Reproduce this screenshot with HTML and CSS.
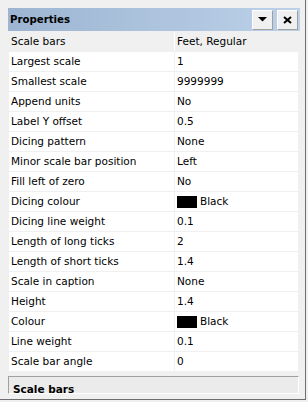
FILE: index.html
```
<!DOCTYPE html>
<html>
<head>
<meta charset="utf-8">
<link rel="stylesheet" href="styles.css">
</head>
<body>
<div class="window">
  <div class="titlebar">
    <span class="title">Properties</span>
    <div class="buttons">
      <div class="btn"><svg width="9" height="5" viewBox="0 0 9 5"><path d="M0 0H9L4.5 4.5Z" fill="#000"/></svg></div>
      <div class="btn"><svg width="9" height="8" viewBox="0 0 9 8"><path d="M1 1L8 7M8 1L1 7" stroke="#000" stroke-width="2"/></svg></div>
    </div>
  </div>
  <div class="grid">
    <div class="row head"><div class="name">Scale bars</div><div class="val">Feet, Regular</div></div>
    <div class="row"><div class="name">Largest scale</div><div class="val">1</div></div>
    <div class="row"><div class="name">Smallest scale</div><div class="val">9999999</div></div>
    <div class="row"><div class="name">Append units</div><div class="val">No</div></div>
    <div class="row"><div class="name">Label Y offset</div><div class="val">0.5</div></div>
    <div class="row"><div class="name">Dicing pattern</div><div class="val">None</div></div>
    <div class="row"><div class="name">Minor scale bar position</div><div class="val">Left</div></div>
    <div class="row"><div class="name">Fill left of zero</div><div class="val">No</div></div>
    <div class="row"><div class="name">Dicing colour</div><div class="val"><span class="swatch"></span>Black</div></div>
    <div class="row"><div class="name">Dicing line weight</div><div class="val">0.1</div></div>
    <div class="row"><div class="name">Length of long ticks</div><div class="val">2</div></div>
    <div class="row"><div class="name">Length of short ticks</div><div class="val">1.4</div></div>
    <div class="row"><div class="name">Scale in caption</div><div class="val">None</div></div>
    <div class="row"><div class="name">Height</div><div class="val">1.4</div></div>
    <div class="row"><div class="name">Colour</div><div class="val"><span class="swatch"></span>Black</div></div>
    <div class="row"><div class="name">Line weight</div><div class="val">0.1</div></div>
    <div class="row"><div class="name">Scale bar angle</div><div class="val">0</div></div>
  </div>
  <div class="desc"><span class="desc-title">Scale bars</span></div>
</div>
</body>
</html>
```
FILE: styles.css
```
html, body {
  margin: 0;
  padding: 0;
  background: #f0f0f0;
}
.window {
  box-sizing: border-box;
  width: 306px;
  height: 400px;
  background: #f0f0f0;
  border-right: 1px solid #6e6e6e;
  border-bottom: 1px solid #6e6e6e;
  padding: 8px 5px 0 8px;
  display: flex;
  flex-direction: column;
  overflow: hidden;
  font-family: "DejaVu Sans", Verdana, sans-serif;
  font-size: 10.5px;
  color: #000;
}
.titlebar {
  height: 23px;
  flex: none;
  display: flex;
  align-items: center;
  justify-content: space-between;
  background: linear-gradient(to right, #9db5d2, #bcd1e9);
  padding-left: 2px;
}
.title {
  font-weight: bold;
  font-size: 10.2px;
}
.buttons {
  display: flex;
  gap: 4px;
  padding-right: 2px;
}
.btn {
  box-sizing: border-box;
  width: 21px;
  height: 20px;
  background: #f0f0f0;
  border-top: 1px solid #ffffff;
  border-left: 1px solid #ffffff;
  border-right: 1px solid #a0a0a0;
  border-bottom: 1px solid #a0a0a0;
  display: flex;
  align-items: center;
  justify-content: center;
}
.grid {
  margin-top: 1px;
  flex: none;
  display: flex;
  flex-direction: column;
  padding: 0 2px 0 1px;
  background: #f0f0f0;
}
.row {
  display: flex;
  height: 19px;
  line-height: 19px;
  border-bottom: 1px solid #f0f0f0;
  background: #fff;
}
.row.head {
  background: #f0f0f0;
  margin: 0 -2px 0 -1px;
  padding: 0 2px 0 1px;
}
.name {
  box-sizing: border-box;
  width: 166px;
  padding-left: 2px;
  border-right: 1px solid #f0f0f0;
  white-space: nowrap;
}
.head .name {
  border-right-color: #fff;
}
.val {
  padding-left: 2px;
  display: flex;
  align-items: center;
  white-space: nowrap;
}
.swatch {
  display: inline-block;
  width: 20px;
  height: 12px;
  background: #000;
  margin-right: 3px;
}
.desc {
  box-sizing: border-box;
  margin-top: 4px;
  height: 18px;
  margin-right: 1px;
  border-top: 1px solid #a0a0a0;
  border-left: 1px solid #a0a0a0;
  border-right: 1px solid #fff;
  border-bottom: 1px solid #fff;
  background: #ebebeb;
  overflow: hidden;
  padding: 4px 0 0 4px;
  flex: none;
}
.desc-title {
  font-weight: bold;
  font-size: 10.5px;
  line-height: 16px;
}
```
